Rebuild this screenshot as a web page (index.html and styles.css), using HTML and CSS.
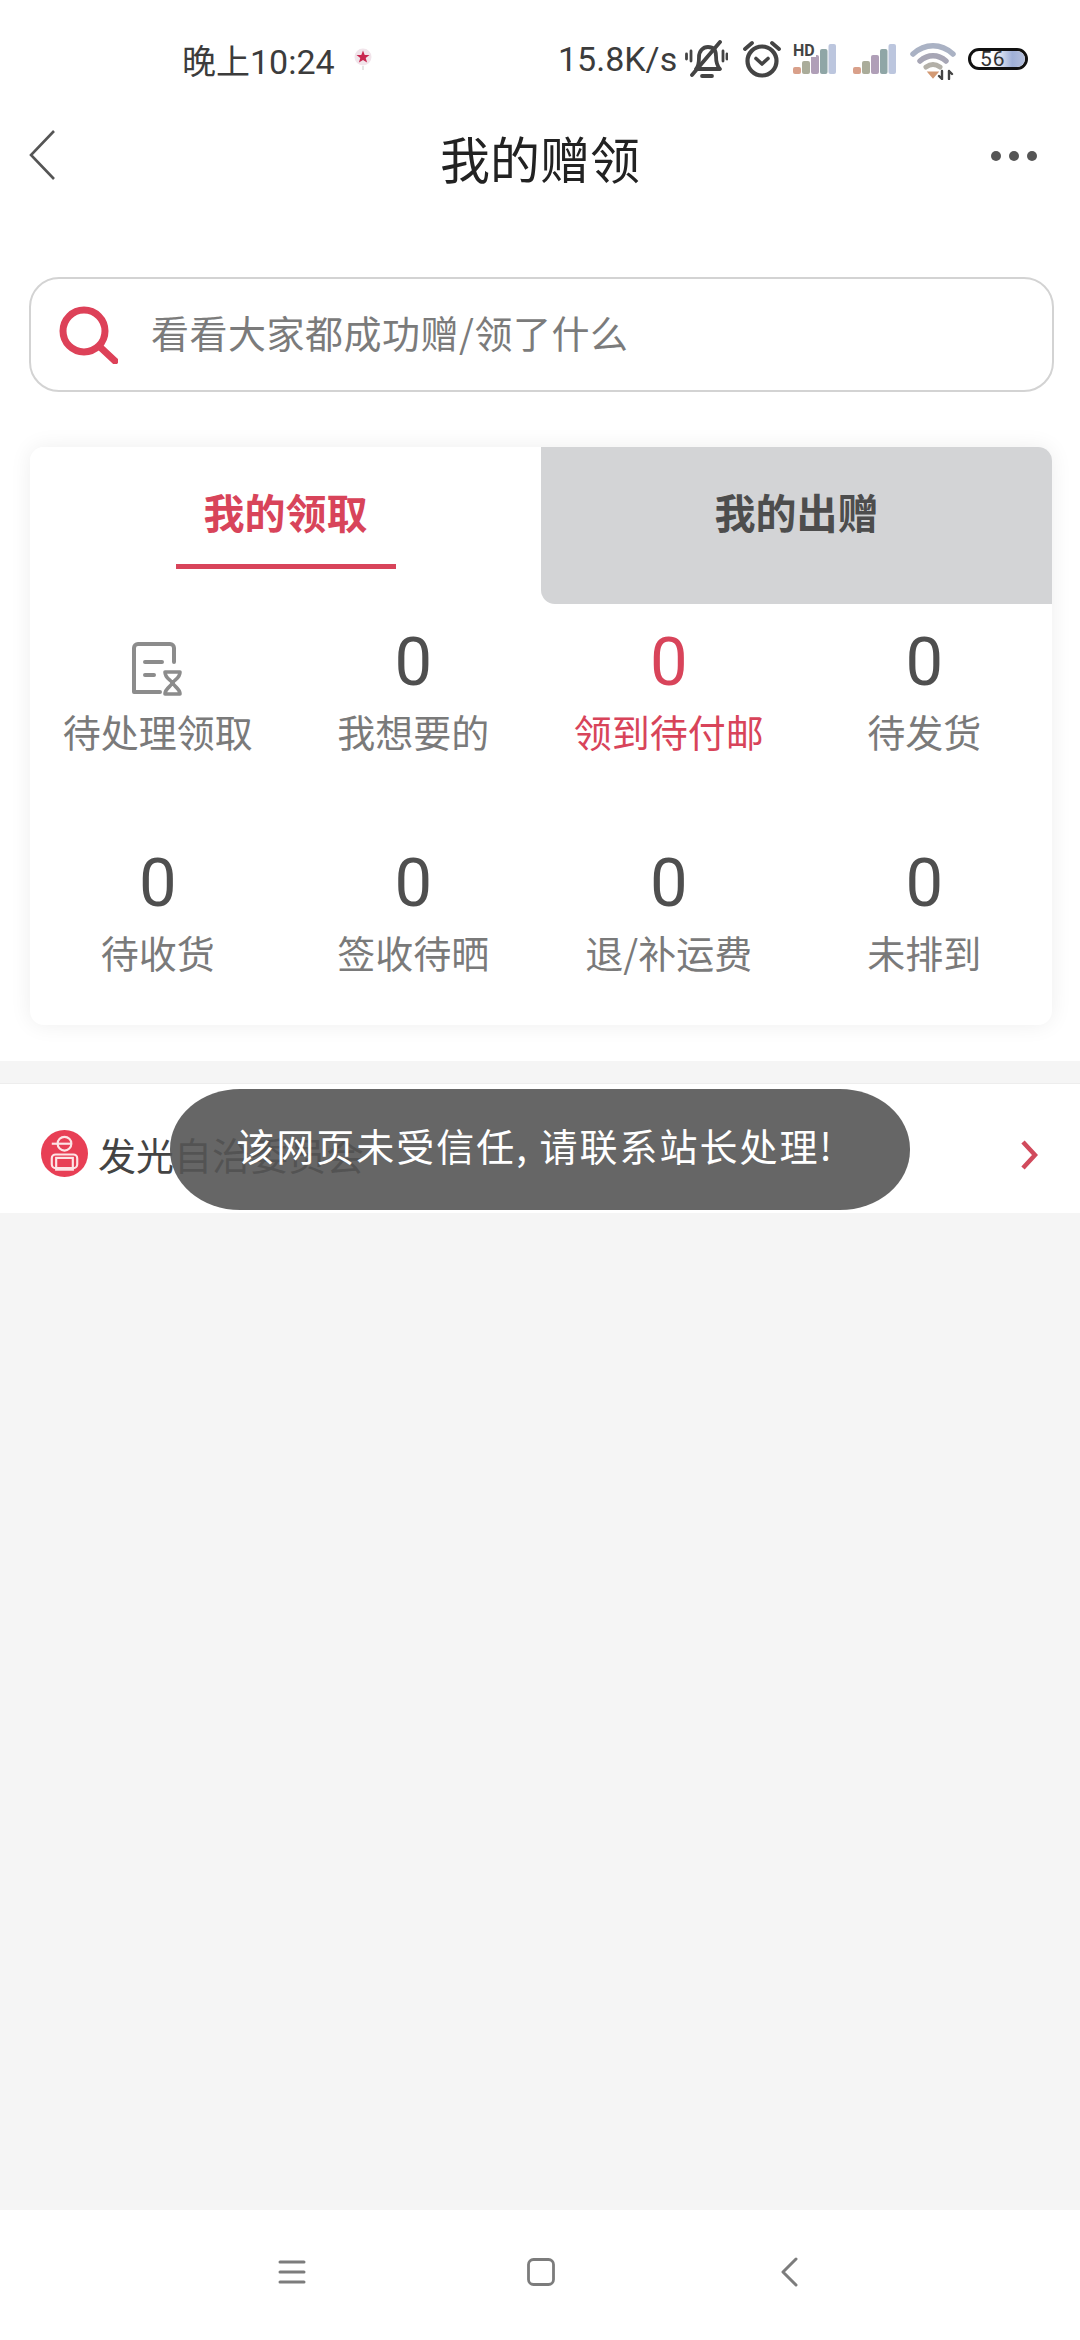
FILE: index.html
```html
<!DOCTYPE html>
<html lang="zh-CN">
<head>
<meta charset="utf-8">
<title>我的赠领</title>
<link rel="stylesheet" href="styles.css">
</head>
<body>
<div class="app">
  <div class="sheet">
    <header class="status">
      <div class="status-left">
        <span class="time">晚上10:24</span>
        <svg class="star-pin" viewBox="0 0 18 22"><circle cx="9" cy="9" r="8.500" fill="#f1e4ea"/><path d="M9 2.500l1.700 4.500 4.800.1-3.800 2.900 1.400 4.600L9 12l-4.100 2.600 1.400-4.600-3.800-2.900 4.800-.1z" fill="#c8264f"/><path d="M9 18v4" stroke="#ddd" stroke-width="1.500"/></svg>
      </div>
      <div class="status-right">
        <span class="speed">15.8K/s</span>
        <svg class="ic-bell" viewBox="0 0 43 38" fill="none" stroke="#444" stroke-width="3.800" stroke-linecap="round" stroke-linejoin="round"><path d="M11 29c3-3 3-8 3-12 0-6 4-10 9-10s8 3 8 9c0 5 1 10 4 13z"/><path d="M35 2L7 35" stroke-width="3.800"/><path d="M17 36h10"/><path d="M6 11v10M1.500 14v5M38 11v10M42 14v5" stroke-width="2.800"/></svg>
        <svg class="ic-alarm" viewBox="0 0 40 38" fill="none" stroke="#444" stroke-linecap="round" stroke-linejoin="round"><circle cx="20" cy="21" r="14.500" stroke-width="4.200"/><path d="M14 18.500l6 5.500 6-5.500" stroke-width="3.600"/><path d="M3 9l7-6M37 9l-7-6" stroke-width="3.800"/></svg>
        <span class="sig-wrap">
          <svg class="ic-signal" viewBox="0 0 43 30"><rect x="0" y="23" width="8" height="7" rx="2" fill="#d9a08a"/><rect x="9" y="17" width="8" height="13" rx="2" fill="#aaac9a"/><rect x="18" y="11" width="8" height="19" rx="2" fill="#b09fb8"/><rect x="27" y="5" width="7.500" height="25" rx="2" fill="#8fa6a6"/><rect x="35.500" y="0" width="7.500" height="30" rx="2" fill="#bcc6de"/></svg>
          <b class="hd">HD</b>
        </span>
        <svg class="ic-signal two" viewBox="0 0 43 30"><rect x="0" y="23" width="8" height="7" rx="2" fill="#d9a08a"/><rect x="9" y="17" width="8" height="13" rx="2" fill="#aaac9a"/><rect x="18" y="11" width="8" height="19" rx="2" fill="#b09fb8"/><rect x="27" y="5" width="7.500" height="25" rx="2" fill="#8fa6a6"/><rect x="35.500" y="0" width="7.500" height="30" rx="2" fill="#bcc6de"/></svg>
        <svg class="ic-wifi" viewBox="0 0 46 38" fill="none" stroke-linecap="round"><path d="M3 12C15 1 31 1 43 12" stroke="#aab2c4" stroke-width="5.500"/><path d="M10 19c8-7 18-7 26 0" stroke="#a7a6b5" stroke-width="5.500"/><path d="M16 25c5-3.500 9-3.500 14 0" stroke="#b3b0a8" stroke-width="5"/><path d="M20 31l3 3.500 3-3.500z" fill="#d39a74" stroke="#d39a74" stroke-width="3"/><path d="M32 29v8M32 37l-3-3M39 37v-8M39 29l3 3" stroke="#444" stroke-width="2.400"/></svg>
        <span class="battery"><span class="battery-fill"></span><span class="battery-num">56</span></span>
      </div>
    </header>

    <nav class="topbar">
      <svg class="back" viewBox="0 0 26 50" fill="none" stroke="#555" stroke-width="2.600"><path d="M25 1L2 25l23 24"/></svg>
      <h1 class="title">我的赠领</h1>
      <div class="more"><i></i><i></i><i></i></div>
    </nav>

    <div class="search">
      <svg class="search-ic" viewBox="0 0 60 58" fill="none" stroke="#dd4158" stroke-linecap="round"><circle cx="26" cy="25" r="21" stroke-width="7"/><path d="M42 41l15 14" stroke-width="7"/></svg>
      <span class="search-text">看看大家都成功赠/领了什么</span>
    </div>

    <section class="card">
      <div class="tabs">
        <div class="tab active"><span>我的领取</span><em></em></div>
        <div class="tab"><span>我的出赠</span></div>
      </div>
      <div class="stats">
        <div class="stat">
          <svg class="stat-ic" viewBox="0 0 52 54" fill="none" stroke="#8c8c8c" stroke-width="4" stroke-linecap="round" stroke-linejoin="round"><path d="M42 20V6a4 4 0 0 0-4-4H6a4 4 0 0 0-4 4v44h26"/><path d="M13 20h17M13 33h9"/><path d="M33 30h15c0 7-7 8-7 11s7 5 7 11H33c0-6 7-8 7-11s-7-4-7-11z" stroke-width="3.600"/></svg>
          <span class="label">待处理领取</span>
        </div>
        <div class="stat"><span class="num">0</span><span class="label">我想要的</span></div>
        <div class="stat hot"><span class="num">0</span><span class="label">领到待付邮</span></div>
        <div class="stat"><span class="num">0</span><span class="label">待发货</span></div>
        <div class="stat"><span class="num">0</span><span class="label">待收货</span></div>
        <div class="stat"><span class="num">0</span><span class="label">签收待晒</span></div>
        <div class="stat"><span class="num">0</span><span class="label">退/补运费</span></div>
        <div class="stat"><span class="num">0</span><span class="label">未排到</span></div>
      </div>
    </section>
  </div>

  <div class="link-row">
    <svg class="row-ic" viewBox="0 0 48 48"><circle cx="24" cy="24" r="24" fill="#e83f55"/><g fill="none" stroke="#fde4e6" stroke-width="2.200"><circle cx="24" cy="14" r="7"/><path d="M11 14h20"/><path d="M15 25h18a4 4 0 0 1 4 4v6a4 4 0 0 1-4 4H15a4 4 0 0 1-4-4v-6a4 4 0 0 1 4-4z"/><rect x="15.500" y="28.500" width="17" height="12"/></g></svg>
    <span class="row-text">发光自治委员会</span>
    <svg class="row-arrow" viewBox="0 0 18 30" fill="none" stroke="#d14a5c" stroke-width="4.500"><path d="M3 2l12 13L3 28"/></svg>
  </div>

  <main class="fill"></main>

  <footer class="softkeys">
    <svg class="key-menu" viewBox="0 0 28 24" fill="none" stroke="#7c7c7c" stroke-width="3" stroke-linecap="round"><path d="M2 2h24M2 12h24M2 22h24"/></svg>
    <svg class="key-home" viewBox="0 0 28 28" fill="none" stroke="#7c7c7c" stroke-width="2.800"><rect x="1.500" y="1.500" width="25" height="25" rx="5"/></svg>
    <svg class="key-back" viewBox="0 0 18 30" fill="none" stroke="#7c7c7c" stroke-width="3" stroke-linecap="round" stroke-linejoin="round"><path d="M15 2L2 15l13 13"/></svg>
  </footer>

  <div class="toast">该网页未受信任, 请联系站长处理!</div>
</div>
</body>
</html>
```

FILE: styles.css
```css
* { box-sizing: border-box; }
html, body { margin: 0; padding: 0; }
body {
  font-family: "Noto Sans CJK SC", "Noto Sans", Roboto, sans-serif;
  background: #f5f5f5;
  color: #444;
}
.app {
  position: relative;
  width: 1080px;
  height: 2340px;
  display: flex;
  flex-direction: column;
  overflow: hidden;
}

/* White upper part of the page, down to the grey band */
.sheet {
  background: #fff;
  padding-bottom: 36px;
  margin-bottom: 22px;
}

/* Status bar */
.status {
  height: 118px;
  display: flex;
  align-items: center;
  padding: 0 52px 0 182px;
  justify-content: space-between;
}
.status-left, .status-right { display: flex; align-items: center; }
.time { font-family: Roboto, "Noto Sans CJK SC", sans-serif; font-size: 34px; color: #3c3c3c; }
.star-pin { width: 18px; height: 22px; margin-left: 19px; }
.speed { font-family: Roboto, sans-serif; font-size: 34px; color: #3c3c3c; width: 127px; white-space: nowrap; }
.ic-bell { width: 43px; height: 38px; margin-right: 14px; }
.ic-alarm { width: 40px; height: 38px; margin-right: 11px; }
.sig-wrap { position: relative; display: block; width: 43px; height: 30px; margin-right: 17px; }
.hd { position: absolute; left: 0; top: 0; font: 700 16px/13px Roboto, sans-serif; color: #444; background: #fff; padding-right: 1px; }
.ic-signal { width: 43px; height: 30px; display: block; }
.ic-signal.two { margin-right: 14px; }
.ic-wifi { width: 46px; height: 38px; margin: 4px 12px 0 0; }
.battery {
  position: relative;
  width: 60px;
  height: 22px;
  border: 3px solid #111;
  border-radius: 11px;
  overflow: hidden;
  display: block;
}
.battery-fill { position: absolute; left: 22px; top: 0; bottom: 0; width: 32px; background: linear-gradient(90deg, #fff, #9fb0d8 60%, #b4bfdc); border-radius: 0 8px 8px 0; }
.battery-num { position: relative; display: block; font: 21px/16px Roboto, sans-serif; color: #333; padding-left: 9px; letter-spacing: 1px; }

/* Page title bar */
.topbar {
  height: 80px;
  display: grid;
  grid-template-columns: 1fr auto 1fr;
  align-items: center;
  padding: 0 43px;
}
.back { width: 26px; height: 50px; margin: -6px 0 0 -14px; }
.title { margin: -3px 0 0; font-size: 50px; line-height: 80px; font-weight: 400; color: #222; }
.more { display: flex; gap: 8px; justify-self: end; margin-top: -4px; }
.more i { width: 10px; height: 10px; border-radius: 50%; background: #555; }

/* Search */
.search {
  display: flex;
  align-items: center;
  margin: 79px 26px 0 29px;
  height: 115px;
  border: 2px solid #d3d3d3;
  border-radius: 30px;
}
.search-ic { width: 60px; height: 58px; margin-left: 27px; flex: none; }
.search-text { margin: -6px 0 0 33px; font-size: 38px; letter-spacing: .5px; color: #7b7b7b; }

/* Card with tabs and counters */
.card {
  margin: 55px 28px 0 30px;
  height: 578px;
  background: #fff;
  border-radius: 14px;
  box-shadow: 0 0 22px rgba(0, 0, 0, .07);
  overflow: hidden;
}
.tabs { display: flex; height: 157px; }
.tab {
  flex: 1;
  display: flex;
  flex-direction: column;
  align-items: center;
  padding-top: 34px;
  background: #d3d4d6;
  font-size: 41px;
  font-weight: 700;
  color: #4d4d4d;
  border-bottom-left-radius: 14px;
}
.tab span { line-height: 60px; }
.tab.active {
  background: #fff;
  color: #d8445a;
  border-radius: 0 18px 0 0;
}
.tab.active em { width: 220px; height: 5px; background: #d8445a; margin-top: 23px; }
.stats { display: grid; grid-template-columns: repeat(4, 1fr); grid-template-rows: 221px 200px; }
.stat { display: flex; flex-direction: column; align-items: center; }
.num { font-family: Roboto, sans-serif; font-size: 67px; line-height: 76px; color: #4f4f4f; margin: 20px 0 6px; }
.label { font-size: 38px; line-height: 50px; color: #7a7a7a; white-space: nowrap; }
.stat-ic { width: 52px; height: 54px; margin: 38px 0 10px; }
.hot .num, .hot .label { color: #d8445a; }

/* Link row */
.link-row {
  height: 130px;
  background: #fff;
  border-top: 1px solid #ededed;
  display: flex;
  align-items: center;
  padding: 10px 42px 0 41px;
}
.row-ic { width: 47px; height: 47px; flex: none; }
.row-text { margin-left: 10px; font-size: 38px; color: #444; flex: 1; }
.row-arrow { width: 18px; height: 30px; margin-top: 3px; }

.fill { flex: 1; background: #f5f5f5; }

/* Android soft keys */
.softkeys {
  height: 130px;
  background: #fff;
  display: flex;
  align-items: center;
  padding: 0 0 6px 278px;
}
.key-menu { width: 28px; height: 24px; }
.key-home { width: 28px; height: 28px; margin-left: 221px; }
.key-back { width: 18px; height: 30px; margin-left: 226px; }

/* Notice lying over the page */
.toast {
  position: absolute;
  left: 170px;
  top: 1089px;
  width: 740px;
  height: 121px;
  padding: 0 10px 11px 0;
  background: rgba(85, 85, 85, .9);
  color: #fff;
  border-radius: 70px / 60px;
  display: flex;
  align-items: center;
  justify-content: center;
  font-size: 38px;
  letter-spacing: 2px;
}
```
